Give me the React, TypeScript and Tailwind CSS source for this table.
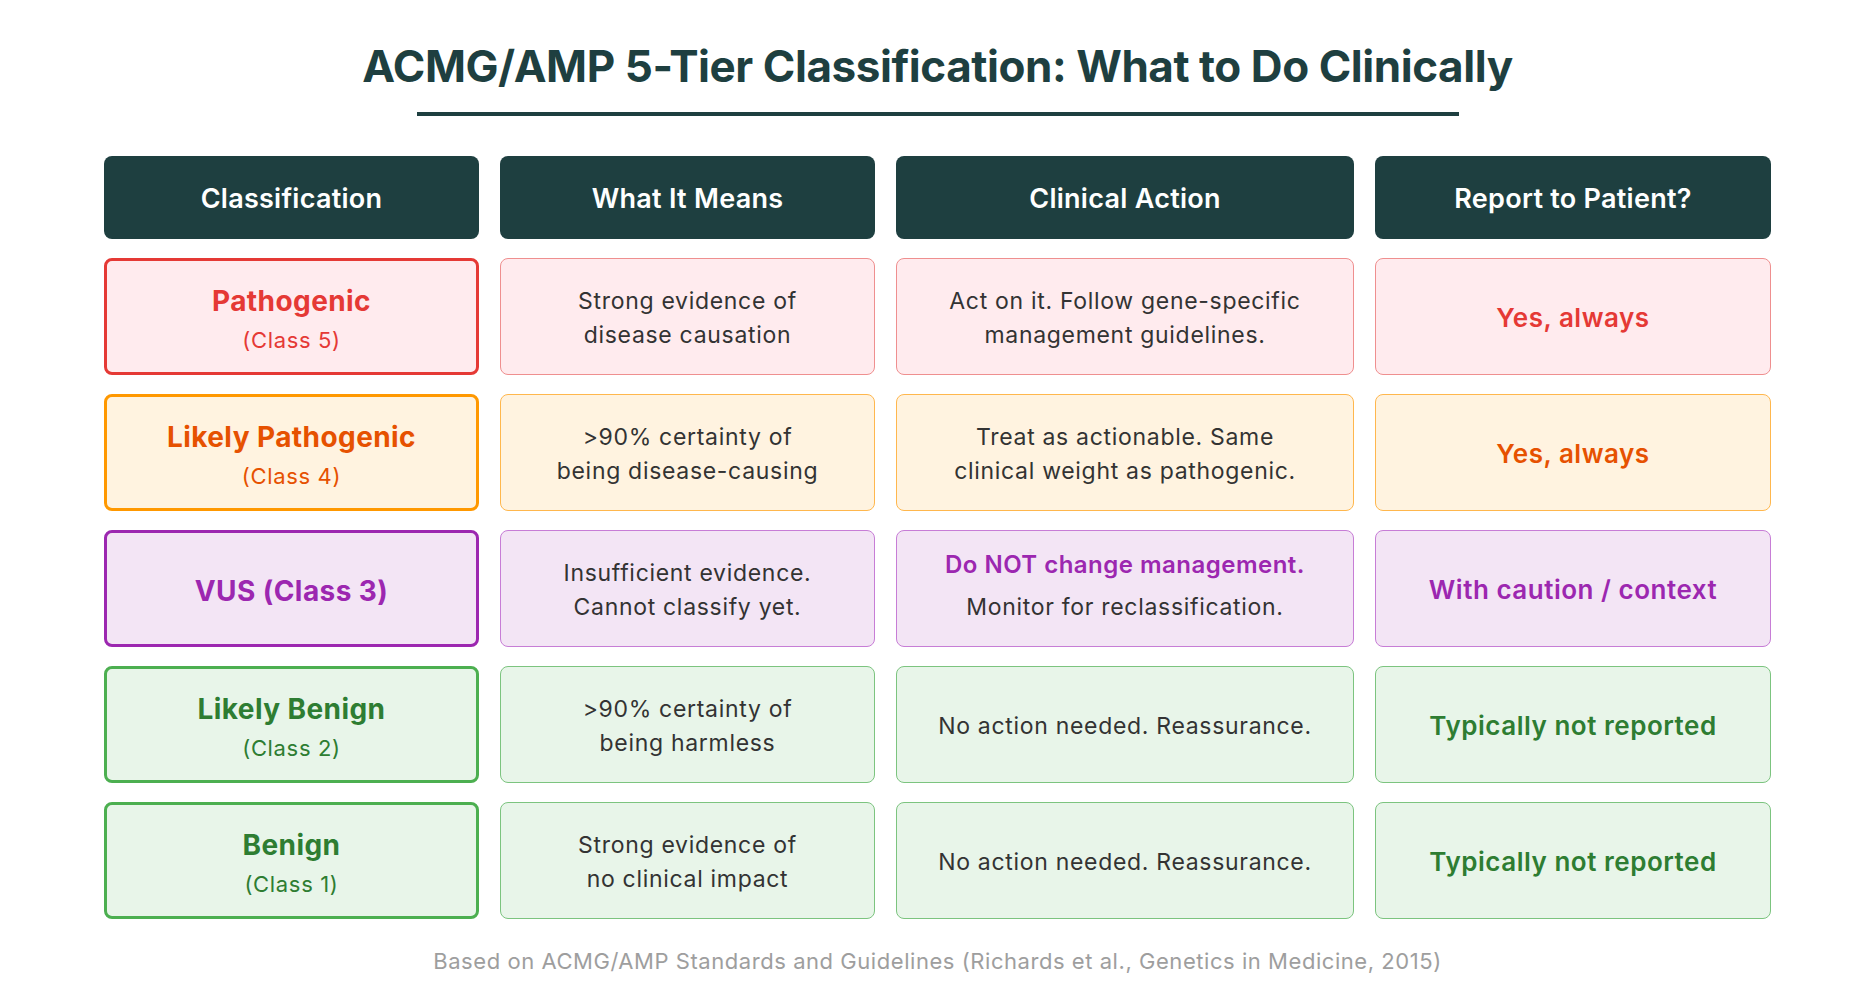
const rows = [
  {
    name: 'Pathogenic',
    sub: '(Class 5)',
    text: 'text-[#e53935]',
    bg: 'bg-[#ffebee]',
    strong: 'border-[#e53935]',
    soft: 'border-[#ef8f8f]',
    means: ['Strong evidence of', 'disease causation'],
    action: ['Act on it. Follow gene-specific', 'management guidelines.'],
    report: 'Yes, always',
  },
  {
    name: 'Likely Pathogenic',
    sub: '(Class 4)',
    text: 'text-[#e65100]',
    bg: 'bg-[#fff3e0]',
    strong: 'border-[#ff9800]',
    soft: 'border-[#ffb74d]',
    means: ['>90% certainty of', 'being disease-causing'],
    action: ['Treat as actionable. Same', 'clinical weight as pathogenic.'],
    report: 'Yes, always',
  },
  {
    name: 'VUS (Class 3)',
    sub: null,
    text: 'text-[#9c27b0]',
    bg: 'bg-[#f3e5f5]',
    strong: 'border-[#9c27b0]',
    soft: 'border-[#c77dd6]',
    means: ['Insufficient evidence.', 'Cannot classify yet.'],
    action: null,
    report: 'With caution / context',
  },
  {
    name: 'Likely Benign',
    sub: '(Class 2)',
    text: 'text-[#2e7d32]',
    bg: 'bg-[#e8f5e9]',
    strong: 'border-[#4caf50]',
    soft: 'border-[#7cc47f]',
    means: ['>90% certainty of', 'being harmless'],
    action: ['No action needed. Reassurance.'],
    report: 'Typically not reported',
  },
  {
    name: 'Benign',
    sub: '(Class 1)',
    text: 'text-[#2e7d32]',
    bg: 'bg-[#e8f5e9]',
    strong: 'border-[#4caf50]',
    soft: 'border-[#7cc47f]',
    means: ['Strong evidence of', 'no clinical impact'],
    action: ['No action needed. Reassurance.'],
    report: 'Typically not reported',
  },
]

const headers = ['Classification', 'What It Means', 'Clinical Action', 'Report to Patient?']

function Lines({ lines }: { lines: string[] }) {
  return (
    <p className="pt-[3px] text-[23px] leading-[34px] tracking-[0.03em] text-[#333333]">
      {lines.map((l, i) => (
        <span key={i} className="block">
          {l}
        </span>
      ))}
    </p>
  )
}

export default function App() {
  return (
    <div
      className="min-h-screen w-full bg-white px-[104px] pt-[39px]"
      style={{ fontFamily: 'Inter, "Noto Sans", sans-serif' }}
    >
      <h1 className="text-center text-[44px] font-bold leading-[54px] tracking-[-0.01em] text-[#1e3f40]">
        ACMG/AMP 5-Tier Classification: What to Do Clinically
      </h1>
      <div className="mx-auto mt-[19px] h-[4px] w-[1042px] bg-[#1e3f40]" />

      <div className="mt-[40px] grid grid-cols-[375px_375px_458px_396px] grid-rows-[83px_117px_117px_117px_117px_117px] gap-x-[21px] gap-y-[19px]">
        {headers.map((h) => (
          <div
            key={h}
            className="flex items-center justify-center rounded-[8px] bg-[#1e3f40] pt-[3px] text-[27px] font-semibold tracking-[0.01em] text-white"
          >
            {h}
          </div>
        ))}

        {rows.map((r) => [
          <div
            key={r.name + '-c'}
            className={`flex flex-col items-center justify-center rounded-[8px] border-[3px] pt-[4px] text-center ${r.bg} ${r.strong} ${r.text}`}
          >
            <span className="text-[28px] font-bold leading-[36px] tracking-[0.015em]">{r.name}</span>
            {r.sub && (
              <span className="mt-[7px] text-[22px] leading-[28px] tracking-[0.03em]">{r.sub}</span>
            )}
          </div>,
          <div
            key={r.name + '-m'}
            className={`flex items-center justify-center rounded-[8px] border-[1.5px] text-center ${r.bg} ${r.soft}`}
          >
            <Lines lines={r.means} />
          </div>,
          <div
            key={r.name + '-a'}
            className={`flex flex-col items-center justify-center rounded-[8px] border-[1.5px] text-center ${r.bg} ${r.soft}`}
          >
            {r.action ? (
              <Lines lines={r.action} />
            ) : (
              <div className="pb-[6px]">
                <p className={`text-[24px] font-semibold leading-[30px] tracking-[0.02em] ${r.text}`}>
                  Do NOT change management.
                </p>
                <p className="mt-[12px] text-[23px] leading-[30px] tracking-[0.03em] text-[#333333]">
                  Monitor for reclassification.
                </p>
              </div>
            )}
          </div>,
          <div
            key={r.name + '-r'}
            className={`flex items-center justify-center rounded-[8px] border-[1.5px] pt-[2px] text-center text-[26px] font-semibold tracking-[0.02em] ${r.bg} ${r.soft} ${r.text}`}
          >
            {r.report}
          </div>,
        ])}
      </div>

      <p className="mt-[26px] text-center text-[22px] tracking-[0.025em] text-[#9e9e9e]">
        Based on ACMG/AMP Standards and Guidelines (Richards et al., Genetics in Medicine, 2015)
      </p>
    </div>
  )
}
